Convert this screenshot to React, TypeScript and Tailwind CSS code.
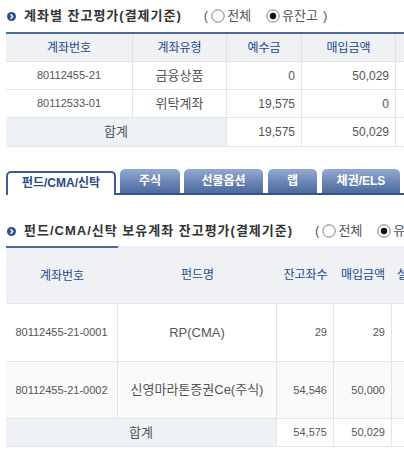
import React from "react";

const FONT = "font-['Liberation_Sans','Noto_Sans_CJK_KR',sans-serif]";

function Bullet() {
  return (
    <svg width="9" height="9" viewBox="0 0 10 10" className="shrink-0">
      <circle cx="5" cy="5" r="5" fill="#2f4f88" />
      <path d="M4 2.6 L6.3 5 L4 7.4" stroke="#fff" strokeWidth="1.6" fill="none" />
    </svg>
  );
}

function Radio({ checked }: { checked?: boolean }) {
  return (
    <svg width="14" height="14" viewBox="0 0 14 14" className="shrink-0">
      <circle cx="7" cy="7" r="6.2" fill="#fff" stroke="#7d7d7d" strokeWidth="1" />
      {checked && <circle cx="7" cy="7" r="3.2" fill="#111" />}
    </svg>
  );
}

function SectionTitle({ title }: { title: string }) {
  return (
    <div className="flex items-center h-[30px]">
      <div className="ml-[1px]">
        <Bullet />
      </div>
      <span className="ml-[8px] text-[13px] font-bold text-[#333] tracking-[1px] whitespace-nowrap">{title}</span>
      <span className="ml-[22px] flex items-center text-[13px] text-[#555] whitespace-nowrap">
        <span className="mr-[3px]">(</span>
        <Radio />
        <span className="ml-[2px]">전체</span>
        <span className="ml-[15px]">
          <Radio checked />
        </span>
        <span className="ml-[2px]">유잔고</span>
        <span className="ml-[5px]">)</span>
      </span>
    </div>
  );
}

const topCols = "grid grid-cols-[127px_94px_75px_94px_80px] w-[470px]";
const fundCols = "grid grid-cols-[112px_159px_57px_58px_80px] w-[466px]";

const th = "flex items-center justify-center text-[12px] text-[#21498f] whitespace-nowrap";
const td = "flex items-center border-r border-[#e2e4e8] whitespace-nowrap";
const num = "justify-end pr-[6px] text-[11px] text-[#555]";
const num12 = "justify-end pr-[6px] text-[12px] text-[#555]";
const txt = "justify-center text-[13px] text-[#555]";
const idc = "justify-center text-[11px] text-[#555]";

export default function App() {
  const tabs = [
    { name: "주식", w: "w-[60px]", ml: "ml-[4px]" },
    { name: "선물옵션", w: "w-[79px]", ml: "ml-[4px]" },
    { name: "랩", w: "w-[49px]", ml: "ml-[5px]" },
    { name: "채권/ELS", w: "w-[78px]", ml: "ml-[5px]" },
  ];

  return (
    <div className={`w-[404px] h-[456px] overflow-hidden bg-white pl-[6px] pt-[1px] ${FONT}`}>
      <SectionTitle title="계좌별 잔고평가(결제기준)" />

      {/* 계좌별 잔고 */}
      <div className="mt-[1px]">
        <div className={`${topCols} h-[30px] bg-[#eff1f5] border-t-2 border-[#4e6a98] border-b border-b-[#e2e4e8]`}>
          <div className={`${th} border-r border-[#dde1e8]`}>계좌번호</div>
          <div className={`${th} border-r border-[#dde1e8]`}>계좌유형</div>
          <div className={`${th} border-r border-[#dde1e8]`}>예수금</div>
          <div className={`${th} border-r border-[#dde1e8]`}>매입금액</div>
          <div className={th}>평가금액</div>
        </div>
        <div className={`${topCols} h-[28px] border-b border-[#e2e4e8]`}>
          <div className={`${td} ${idc}`}>80112455-21</div>
          <div className={`${td} ${txt}`}>금융상품</div>
          <div className={`${td} ${num12}`}>0</div>
          <div className={`${td} ${num12}`}>50,029</div>
          <div className={`${td} ${num12}`}>50,012</div>
        </div>
        <div className={`${topCols} h-[28px] border-b border-[#e2e4e8]`}>
          <div className={`${td} ${idc}`}>80112533-01</div>
          <div className={`${td} ${txt}`}>위탁계좌</div>
          <div className={`${td} ${num12}`}>19,575</div>
          <div className={`${td} ${num12}`}>0</div>
          <div className={`${td} ${num12}`}>0</div>
        </div>
        <div className={`${topCols} h-[29px] border-b border-[#e2e4e8]`}>
          <div className={`${td} ${txt} col-span-2 bg-[#eef1f6]`}>합계</div>
          <div className={`${td} ${num12}`}>19,575</div>
          <div className={`${td} ${num12}`}>50,029</div>
          <div className={`${td} ${num12}`}>50,012</div>
        </div>
      </div>

      {/* 탭 */}
      <div className="mt-[22px] flex items-end h-[26px] border-b-2 border-[#34548c] w-[420px]">
        <div className="w-[110px] h-[24px] mb-[-2px] pb-[2px] bg-white border-2 border-b-0 border-[#3d5b94] rounded-t-[5px] flex items-center justify-center text-[12px] font-bold text-[#2b4a86] whitespace-nowrap">
          펀드/CMA/신탁
        </div>
        {tabs.map((t) => (
          <div
            key={t.name}
            className={`${t.w} ${t.ml} h-[24px] rounded-t-[5px] bg-gradient-to-b from-[#94aad0] via-[#6e88b7] to-[#4d6a9d] flex items-center justify-center text-[12px] font-bold text-white whitespace-nowrap`}
          >
            {t.name}
          </div>
        ))}
      </div>

      <div className="mt-[21px]">
        <SectionTitle title="펀드/CMA/신탁 보유계좌 잔고평가(결제기준)" />
      </div>

      {/* 펀드 보유계좌 */}
      <div>
        <div className={`${fundCols} h-[58px] bg-[#eff1f5] border-b border-[#e2e4e8]`}>
          <div className={`${th} border-t-2 border-[#4e6a98]`}>계좌번호</div>
          <div className={`${th} mt-[1px]`}>펀드명</div>
          <div className={`${th} mt-[1px]`}>잔고좌수</div>
          <div className={`${th} mt-[1px]`}>매입금액</div>
          <div className={`${th} mt-[1px] justify-start pl-[5px]`}>설정금액</div>
        </div>
        <div className={`${fundCols} h-[58px] border-b border-[#e2e4e8]`}>
          <div className={`${td} ${idc}`}>80112455-21-0001</div>
          <div className={`${td} ${txt}`}>RP(CMA)</div>
          <div className={`${td} ${num} pr-[5px]`}>29</div>
          <div className={`${td} ${num} pr-[5px]`}>29</div>
          <div className={`${td} ${num}`}>29</div>
        </div>
        <div className={`${fundCols} h-[57px] border-b border-[#e2e4e8] bg-[#fafafa]`}>
          <div className={`${td} ${idc}`}>80112455-21-0002</div>
          <div className={`${td} ${txt}`}>신영마라톤증권Ce(주식)</div>
          <div className={`${td} ${num} pr-[5px]`}>54,546</div>
          <div className={`${td} ${num} pr-[5px]`}>50,000</div>
          <div className={`${td} ${num}`}>50,000</div>
        </div>
        <div className={`${fundCols} h-[28px] border-b border-[#e2e4e8]`}>
          <div className={`${td} ${txt} col-span-2 bg-[#eef1f6]`}>합계</div>
          <div className={`${td} ${num} pr-[5px]`}>54,575</div>
          <div className={`${td} ${num} pr-[5px]`}>50,029</div>
          <div className={`${td} ${num}`}>50,029</div>
        </div>
      </div>
    </div>
  );
}
